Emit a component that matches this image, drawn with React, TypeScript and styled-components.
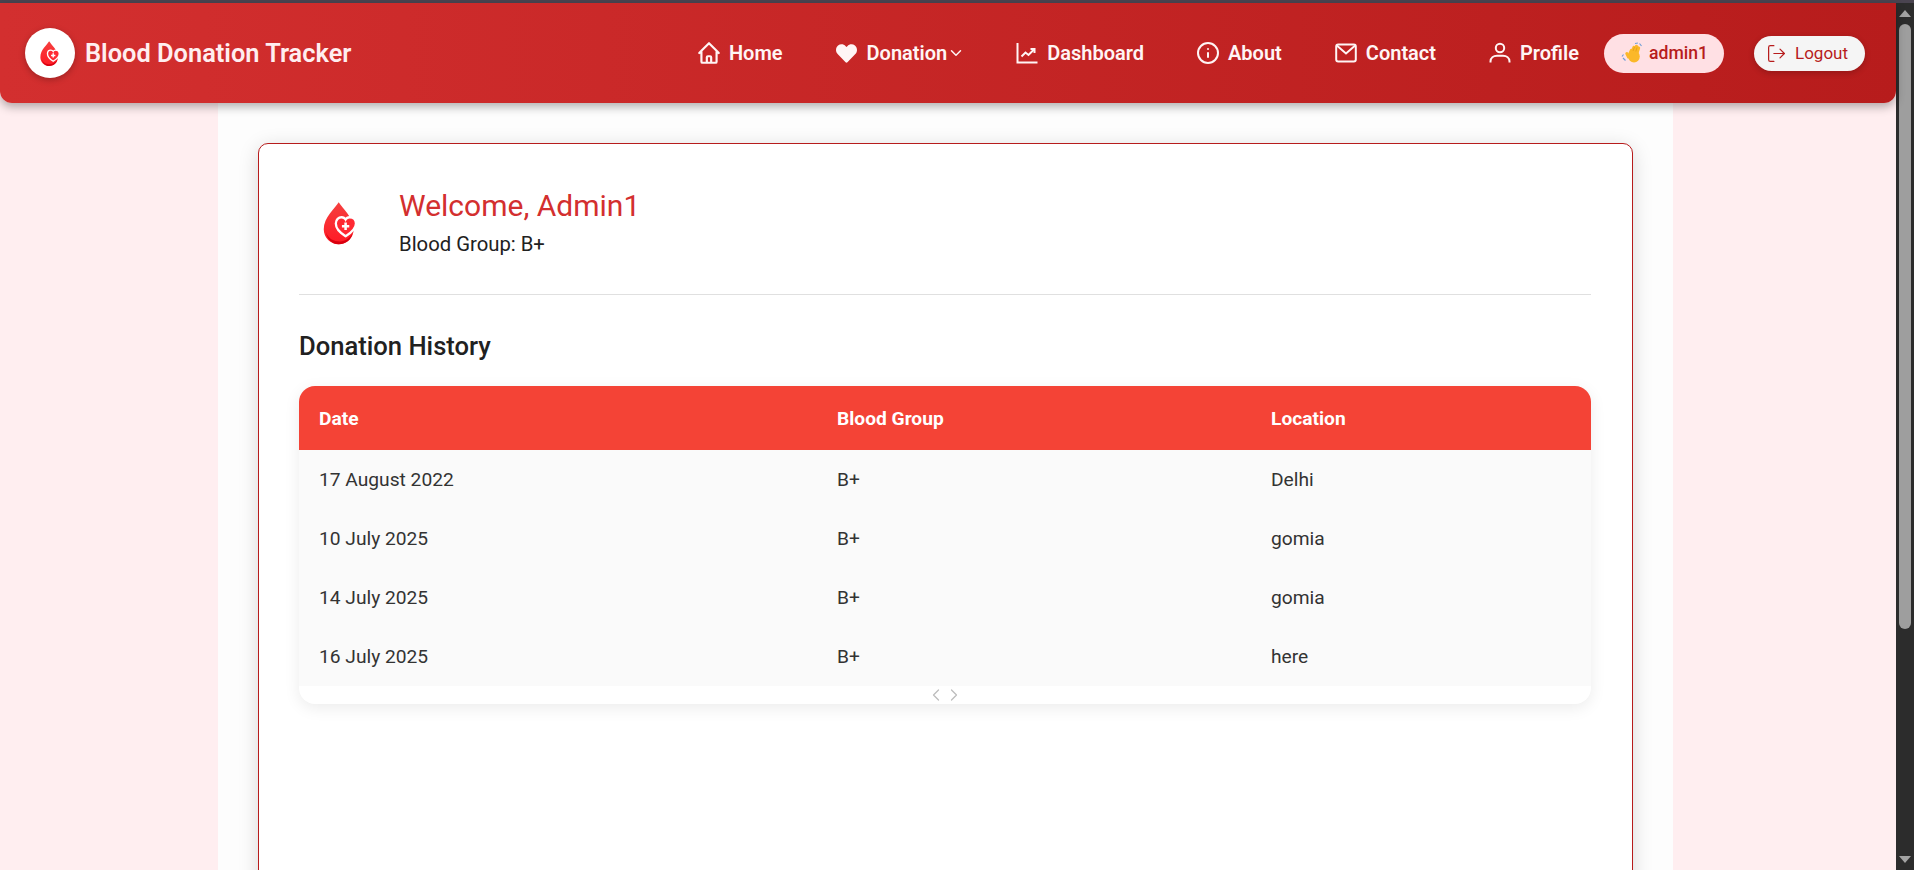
import { createGlobalStyle, styled } from "styled-components";
import { ChevronDown, ChevronLeft, ChevronRight, Info, LogOut } from "lucide-react";
import { FaHeart } from "react-icons/fa";
import { HiOutlineHome } from "react-icons/hi";

const GlobalStyle = createGlobalStyle`
  html, body {
    margin: 0;
    height: 100%;
    overflow: hidden;
    font-family: Roboto, "Noto Sans", sans-serif;
    background: #ffffff;
  }
`;

const Shell = styled.div`
  display: flex;
  flex-direction: column;
  height: 870px;
  overflow: hidden;
`;

const TopEdge = styled.div`
  height: 3px;
  flex: none;
  background: #4a4450;
`;

const Viewport = styled.div`
  flex: 1;
  min-height: 0;
  display: flex;
`;

const Page = styled.div`
  flex: 1;
  min-width: 0;
  background: #ffeef0;
  display: flex;
  flex-direction: column;
`;

const Navbar = styled.header`
  position: relative;
  z-index: 2;
  flex: none;
  height: 100px;
  display: flex;
  align-items: center;
  padding: 0 31px 0 25px;
  background: linear-gradient(90deg, #d32f2f, #b71c1c);
  border-radius: 0 0 12px 12px;
  box-shadow: 0 4px 10px rgba(0, 0, 0, 0.3);
`;

const Brand = styled.div`
  display: flex;
  align-items: center;
  gap: 10px;
  margin-right: auto;
`;

const LogoCircle = styled.div`
  width: 50px;
  height: 50px;
  border-radius: 50%;
  background: #ffffff;
  display: flex;
  align-items: center;
  justify-content: center;
  box-shadow: 0 2px 6px rgba(0, 0, 0, 0.25);
`;

const BrandName = styled.div`
  color: #ffeef0;
  font-size: 25.4px;
  font-weight: 600;
`;

const NavLinks = styled.nav`
  display: flex;
  align-items: center;
`;

const NavLink = styled.a`
  display: flex;
  align-items: center;
  gap: 9px;
  margin-right: 53px;
  color: #fff5f5;
  font-size: 20px;
  font-weight: 600;
  white-space: nowrap;

  &:last-child {
    margin-right: 25px;
  }
`;

const NavIcon = styled.span`
  width: 22px;
  height: 24px;
  flex: none;
  display: flex;
  align-items: center;
  justify-content: center;

  svg {
    flex: none;
  }
`;

const Caret = styled.span`
  display: flex;
  margin-left: -9px;
  margin-right: -2px;
`;

const UserPill = styled.div`
  display: flex;
  align-items: center;
  gap: 6px;
  width: 120px;
  height: 39px;
  box-sizing: border-box;
  padding-left: 17px;
  margin-right: 30px;
  border-radius: 20px;
  background: #ffe0e4;
  color: #b71c1c;
  font-size: 17.6px;
  font-weight: 500;
`;

const LogoutButton = styled.button`
  display: flex;
  align-items: center;
  gap: 8px;
  width: 111px;
  height: 35px;
  padding: 0 0 0 12px;
  border: none;
  border-radius: 18px;
  background: #f5f5f5;
  color: #b71c1c;
  font: 400 17px Roboto, sans-serif;
  box-shadow: 0 2px 6px rgba(0, 0, 0, 0.2);
`;

const Container = styled.main`
  width: 1455px;
  margin-left: 218px;
  flex: 1;
  box-sizing: border-box;
  padding: 40px 40px 0;
  background: #fdfdfd;
`;

const Card = styled.section`
  height: 900px;
  box-sizing: border-box;
  padding: 25px 41px 25px 40px;
  background: #ffffff;
  border: 1px solid #b71c1c;
  border-radius: 10px;
  box-shadow: 0 4px 20px rgba(0, 0, 0, 0.15);
`;

const Profile = styled.div`
  display: flex;
  align-items: center;
  gap: 16px;
  height: 126px;
  box-sizing: border-box;
  padding-bottom: 17px;
  border-bottom: 1px solid #e0e0e0;
`;

const ProfileLogo = styled.div`
  width: 84px;
  height: 70px;
  display: flex;
  align-items: center;
  justify-content: center;
`;

const Welcome = styled.h2`
  margin: 0 0 6px;
  color: #d32f2f;
  font-size: 30px;
  font-weight: 400;
  line-height: 36px;
`;

const BloodGroup = styled.div`
  color: #212121;
  font-size: 20.3px;
  line-height: 28px;
`;

const SectionTitle = styled.h3`
  margin: 35px 0 24px;
  color: #212121;
  font-size: 25.6px;
  font-weight: 500;
  line-height: 32px;
`;

const TableWrap = styled.div`
  border-radius: 16px;
  overflow: hidden;
  background: #ffffff;
  box-shadow: 0 4px 16px rgba(0, 0, 0, 0.08);
`;

const Table = styled.div`
  display: grid;
  grid-template-columns: 518px 434px 1fr;
`;

const HeadCell = styled.div`
  height: 64px;
  display: flex;
  align-items: center;
  padding-left: 20px;
  background: #f44336;
  color: #ffffff;
  font-size: 19.2px;
  font-weight: 700;
`;

const Cell = styled.div`
  height: 59px;
  display: flex;
  align-items: center;
  padding-left: 20px;
  background: #fafafa;
  color: #333333;
  font-size: 19.2px;
`;

const ScrollHint = styled.div`
  height: 18px;
  display: flex;
  align-items: center;
  justify-content: center;
  color: #bdbdbd;

  svg + svg {
    margin-left: -2px;
  }
`;

const Scrollbar = styled.aside`
  flex: none;
  width: 18px;
  background: #2c2c2c;
  display: flex;
  flex-direction: column;
  align-items: center;
`;

const ScrollArrow = styled.div<{ $down?: boolean }>`
  width: 0;
  height: 0;
  flex: none;
  margin: 7px 0;
  border-left: 6px solid transparent;
  border-right: 6px solid transparent;
  ${(p) => (p.$down ? "border-top: 7px solid #a3a3a3;" : "border-bottom: 7px solid #a3a3a3;")}
`;

const ScrollThumb = styled.div`
  width: 12px;
  height: 605px;
  flex: none;
  border-radius: 6px;
  background: #9e9e9e;
`;

const ScrollGap = styled.div`
  flex: 1;
`;

function DropLogo({ size }: { size: number }) {
  const id = `drop-${size}`;
  return (
    <svg width={size} height={size} viewBox="0 0 40 40">
      <defs>
        <linearGradient id={id} x1="0" y1="0" x2="0" y2="1">
          <stop offset="0" stopColor="#f5403f" />
          <stop offset="1" stopColor="#ff1a25" />
        </linearGradient>
      </defs>
      <path
        d="M18 2C15 7 5 15 5 25.5C5 33 11 38.5 18 38.5C25 38.5 31 33 31 25.5C31 15 21 7 18 2Z"
        fill={`url(#${id})`}
      />
      <path
        d="M7 28C9 34 14 36 19 36C24 36 28 33 30 29C29 35 24 38.5 18 38.5C12 38.5 8 34 7 28Z"
        fill="#d9000f"
      />
      <path
        d="M24 31.5C19 28.5 15.5 25 15.5 20.5C15.5 17 18 15 20.5 15C22 15 23.3 15.7 24 17C24.7 15.7 26 15 27.5 15C30.5 15 33 17 33 20.5C33 25 29 28.5 24 31.5Z"
        fill="#ff2a33"
        stroke="#ffffff"
        strokeWidth="2"
      />
      <path d="M24 19.5V26M20.8 22.8H27.2" stroke="#ffffff" strokeWidth="2.2" />
    </svg>
  );
}

function ChartIcon() {
  return (
    <svg width="22" height="22" viewBox="0 0 22 22" fill="none" stroke="currentColor" strokeWidth="2">
      <path d="M1.5 1V20.5H21.5" />
      <path d="M5.5 14.5L9.5 10.5L12.5 13L18 7.5" />
      <path d="M14.5 7H18.5V11" />
    </svg>
  );
}

function MailIcon() {
  return (
    <svg width="22" height="20" viewBox="0 0 22 20" fill="none" stroke="currentColor" strokeWidth="2">
      <rect x="1.2" y="1.6" width="19.6" height="16.8" rx="2" />
      <path d="M1.8 2.5L11 10.5L20.2 2.5" />
    </svg>
  );
}

function UserIcon() {
  return (
    <svg width="22" height="22" viewBox="0 0 22 22" fill="none" stroke="currentColor" strokeWidth="2">
      <circle cx="11" cy="6" r="4.2" />
      <path d="M1.5 20.5V19.5C1.5 16 4.5 13.8 8 13.8H14C17.5 13.8 20.5 16 20.5 19.5V20.5" />
    </svg>
  );
}

function WaveEmoji() {
  return (
    <svg width="22" height="22" viewBox="0 0 22 22">
      <g stroke="#fbb829" strokeWidth="3.4" strokeLinecap="round" fill="none">
        <path d="M8 14L10.5 8.5" />
        <path d="M10.5 12L13 5.5" />
        <path d="M13 11.5L15.5 4.5" />
        <path d="M15.5 12L17.5 6" />
      </g>
      <ellipse cx="13" cy="14.5" rx="5.8" ry="6" fill="#fbb829" />
      <path d="M7.5 15L5.8 11.5" stroke="#fbb829" strokeWidth="3" strokeLinecap="round" />
      <path d="M12 9L13.5 5M14.8 9.5L16 5.5" stroke="#e39a12" strokeWidth="0.7" fill="none" />
      <path d="M2.5 12.5L1 14.5M2 16L4.5 18.5M14 1.5L17 1M18.5 1.5L20.5 4" stroke="#6f9fd8" strokeWidth="1.2" fill="none" />
    </svg>
  );
}

const rows = [
  { date: "17 August 2022", group: "B+", location: "Delhi" },
  { date: "10 July 2025", group: "B+", location: "gomia" },
  { date: "14 July 2025", group: "B+", location: "gomia" },
  { date: "16 July 2025", group: "B+", location: "here" },
];

export default function App() {
  return (
    <Shell>
      <GlobalStyle />
      <TopEdge />
      <Viewport>
        <Page>
          <Navbar>
            <Brand>
              <LogoCircle>
                <DropLogo size={27} />
              </LogoCircle>
              <BrandName>Blood Donation Tracker</BrandName>
            </Brand>
            <NavLinks>
              <NavLink>
                <NavIcon>
                  <HiOutlineHome size={26} />
                </NavIcon>
                Home
              </NavLink>
              <NavLink>
                <NavIcon>
                  <FaHeart size={21} />
                </NavIcon>
                Donation
                <Caret>
                  <ChevronDown size={18} strokeWidth={2} />
                </Caret>
              </NavLink>
              <NavLink>
                <NavIcon>
                  <ChartIcon />
                </NavIcon>
                Dashboard
              </NavLink>
              <NavLink>
                <NavIcon>
                  <Info size={24} strokeWidth={2} />
                </NavIcon>
                About
              </NavLink>
              <NavLink>
                <NavIcon>
                  <MailIcon />
                </NavIcon>
                Contact
              </NavLink>
              <NavLink>
                <NavIcon>
                  <UserIcon />
                </NavIcon>
                Profile
              </NavLink>
            </NavLinks>
            <UserPill>
              <WaveEmoji />
              admin1
            </UserPill>
            <LogoutButton>
              <LogOut size={21} strokeWidth={1.4} />
              Logout
            </LogoutButton>
          </Navbar>
          <Container>
            <Card>
              <Profile>
                <ProfileLogo>
                  <DropLogo size={46} />
                </ProfileLogo>
                <div>
                  <Welcome>Welcome, Admin1</Welcome>
                  <BloodGroup>Blood Group: B+</BloodGroup>
                </div>
              </Profile>
              <SectionTitle>Donation History</SectionTitle>
              <TableWrap>
                <Table>
                  <HeadCell>Date</HeadCell>
                  <HeadCell>Blood Group</HeadCell>
                  <HeadCell>Location</HeadCell>
                  {rows.flatMap((r) => [
                    <Cell key={`${r.date}-date`}>{r.date}</Cell>,
                    <Cell key={`${r.date}-group`}>{r.group}</Cell>,
                    <Cell key={`${r.date}-location`}>{r.location}</Cell>,
                  ])}
                </Table>
                <ScrollHint>
                  <ChevronLeft size={20} strokeWidth={1.5} />
                  <ChevronRight size={20} strokeWidth={1.5} />
                </ScrollHint>
              </TableWrap>
            </Card>
          </Container>
        </Page>
        <Scrollbar>
          <ScrollArrow />
          <ScrollThumb />
          <ScrollGap />
          <ScrollArrow $down />
        </Scrollbar>
      </Viewport>
    </Shell>
  );
}
